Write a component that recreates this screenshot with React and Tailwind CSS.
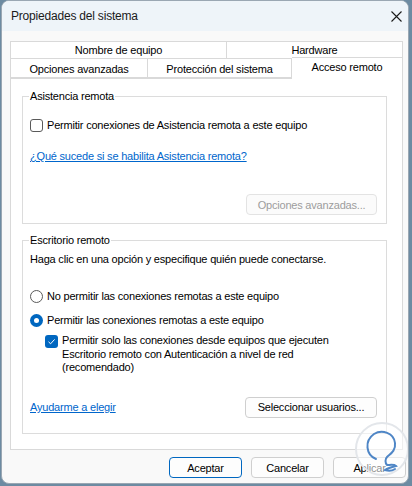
const font = { fontFamily: '"Liberation Sans", Arial, sans-serif' };

const Tab = ({ label, className }) => (
  <div className={"flex items-center justify-center border border-[#d9d9d9] bg-white text-black " + className}>
    {label}
  </div>
);

const Button = ({ label, className }) => (
  <div className={"flex items-center justify-center rounded-[4px] border " + className}>
    {label}
  </div>
);

const Watermark = () => (
  <svg width="56" height="56" viewBox="0 0 56 56" className="absolute right-[-2px] bottom-[6px] pointer-events-none">
    <circle cx="28" cy="28" r="26" fill="rgba(255,255,255,0.55)" stroke="#e3e6ea" strokeWidth="2" />
    <path
      d="M22 38 C12 34 10 20 20 13 C28 8 40 12 41 22 C42 30 36 33 33 36 C31 38 31 42 33 44 M33 44 C36 44 40 43 42 45 C38 46 34 47 31 49 C34 50 38 50 41 48"
      fill="none"
      stroke="#4f86c6"
      strokeWidth="2"
      strokeLinecap="round"
    />
  </svg>
);

export default function App() {
  return (
    <div className="w-[412px] h-[486px] bg-[#6d8ba2] overflow-hidden text-[11px] leading-[14px] tracking-[-0.2px]" style={font}>
      <div className="relative ml-[1px] w-[408px] h-[484px] rounded-[8px] border border-[#9aa7b3] bg-[#f9f9f9] flex flex-col overflow-hidden">
        <div className="h-[30px] shrink-0 bg-[#eef4f9] flex items-center justify-between pl-[9px] pr-[6px]">
          <span className="text-[12px] text-[#1a1a1a]">Propiedades del sistema</span>
          <svg width="11" height="11" viewBox="0 0 11 11">
            <path d="M0.5 0.5 L10.5 10.5 M10.5 0.5 L0.5 10.5" stroke="#1a1a1a" strokeWidth="1.1" />
          </svg>
        </div>

        <div className="flex flex-col pl-[8px] pt-[10px]">
          <div className="flex w-[393px] h-[17px]">
            <Tab label="Nombre de equipo" className="w-[217px] border-b-0" />
            <Tab label="Hardware" className="w-[176px] border-l-0 border-b-0" />
          </div>
          <div className="flex w-[393px] h-[20px] items-end">
            <Tab label="Opciones avanzadas" className="w-[138px] h-[20px] pt-[2px]" />
            <Tab label="Protección del sistema" className="w-[144px] h-[20px] pt-[2px] border-l-0" />
            <Tab label="Acceso remoto" className="w-[111px] h-[22px] border-l-0 border-b-0 pb-[4px] relative z-10 mb-[-1px]" />
          </div>

          <div className="w-[393px] h-[372px] border border-[#d9d9d9] bg-white pl-[11px] pr-[15px] pt-[10px] flex flex-col">
            <fieldset className="border border-[#dcdcdc] h-[135px] px-[7px] pb-0 m-0">
              <legend className="px-[1px] -ml-[1px] text-black">Asistencia remota</legend>
              <div className="flex items-center gap-[4px] mt-[15px]">
                <span className="w-[13px] h-[13px] rounded-[3px] border border-[#5a5a5a] bg-white" />
                <span>Permitir conexiones de Asistencia remota a este equipo</span>
              </div>
              <div className="mt-[17px] text-[#0066cc] underline">
                ¿Qué sucede si se habilita Asistencia remota?
              </div>
              <div className="flex justify-end mt-[31px] mr-[2px]">
                <Button label="Opciones avanzadas..." className="w-[131px] h-[21px] border-[#e3e3e3] bg-[#fbfbfb] text-[#9d9d9d]" />
              </div>
            </fieldset>

            <fieldset className="mt-[9px] border border-[#dcdcdc] h-[201px] px-[7px] m-0">
              <legend className="px-[1px] -ml-[1px] text-black">Escritorio remoto</legend>
              <div className="mt-[5px]">Haga clic en una opción y especifique quién puede conectarse.</div>

              <div className="flex items-center gap-[4px] mt-[23px]">
                <span className="w-[13px] h-[13px] rounded-full border border-[#5a5a5a] bg-white" />
                <span>No permitir las conexiones remotas a este equipo</span>
              </div>
              <div className="flex items-center gap-[4px] mt-[10px]">
                <span className="w-[13px] h-[13px] rounded-full bg-[#0067c0] flex items-center justify-center">
                  <span className="w-[5px] h-[5px] rounded-full bg-white" />
                </span>
                <span>Permitir las conexiones remotas a este equipo</span>
              </div>
              <div className="flex items-start gap-[4px] mt-[7px] ml-[15px] leading-[13.5px]">
                <span className="w-[13px] h-[13px] mt-[1px] shrink-0 rounded-[3px] bg-[#0067c0] flex items-center justify-center">
                  <svg width="9" height="9" viewBox="0 0 9 9">
                    <path d="M1.5 4.8 L3.6 6.8 L7.6 2.4" fill="none" stroke="white" strokeWidth="1" />
                  </svg>
                </span>
                <span>
                  Permitir solo las conexiones desde equipos que ejecuten
                  <br />
                  Escritorio remoto con Autenticación a nivel de red
                  <br />
                  (recomendado)
                </span>
              </div>
              <div className="flex items-center justify-between mt-[22px] mr-[2px]">
                <span className="text-[#0066cc] underline">Ayudarme a elegir</span>
                <Button label="Seleccionar usuarios..." className="w-[132px] h-[21px] border-[#cfcfcf] bg-[#fdfdfd] text-black" />
              </div>
            </fieldset>
          </div>

          <div className="flex gap-[9px] ml-[159px] mt-[7px]">
            <Button label="Aceptar" className="w-[73px] h-[21px] border-[#0067c0] bg-[#fdfdfd] text-black" />
            <Button label="Cancelar" className="w-[73px] h-[21px] border-[#cfcfcf] bg-[#fdfdfd] text-black" />
            <Button label="Aplicar" className="w-[73px] h-[21px] border-[#cfcfcf] bg-[#fdfdfd] text-black" />
          </div>
        </div>
        <Watermark />
      </div>
    </div>
  );
}
